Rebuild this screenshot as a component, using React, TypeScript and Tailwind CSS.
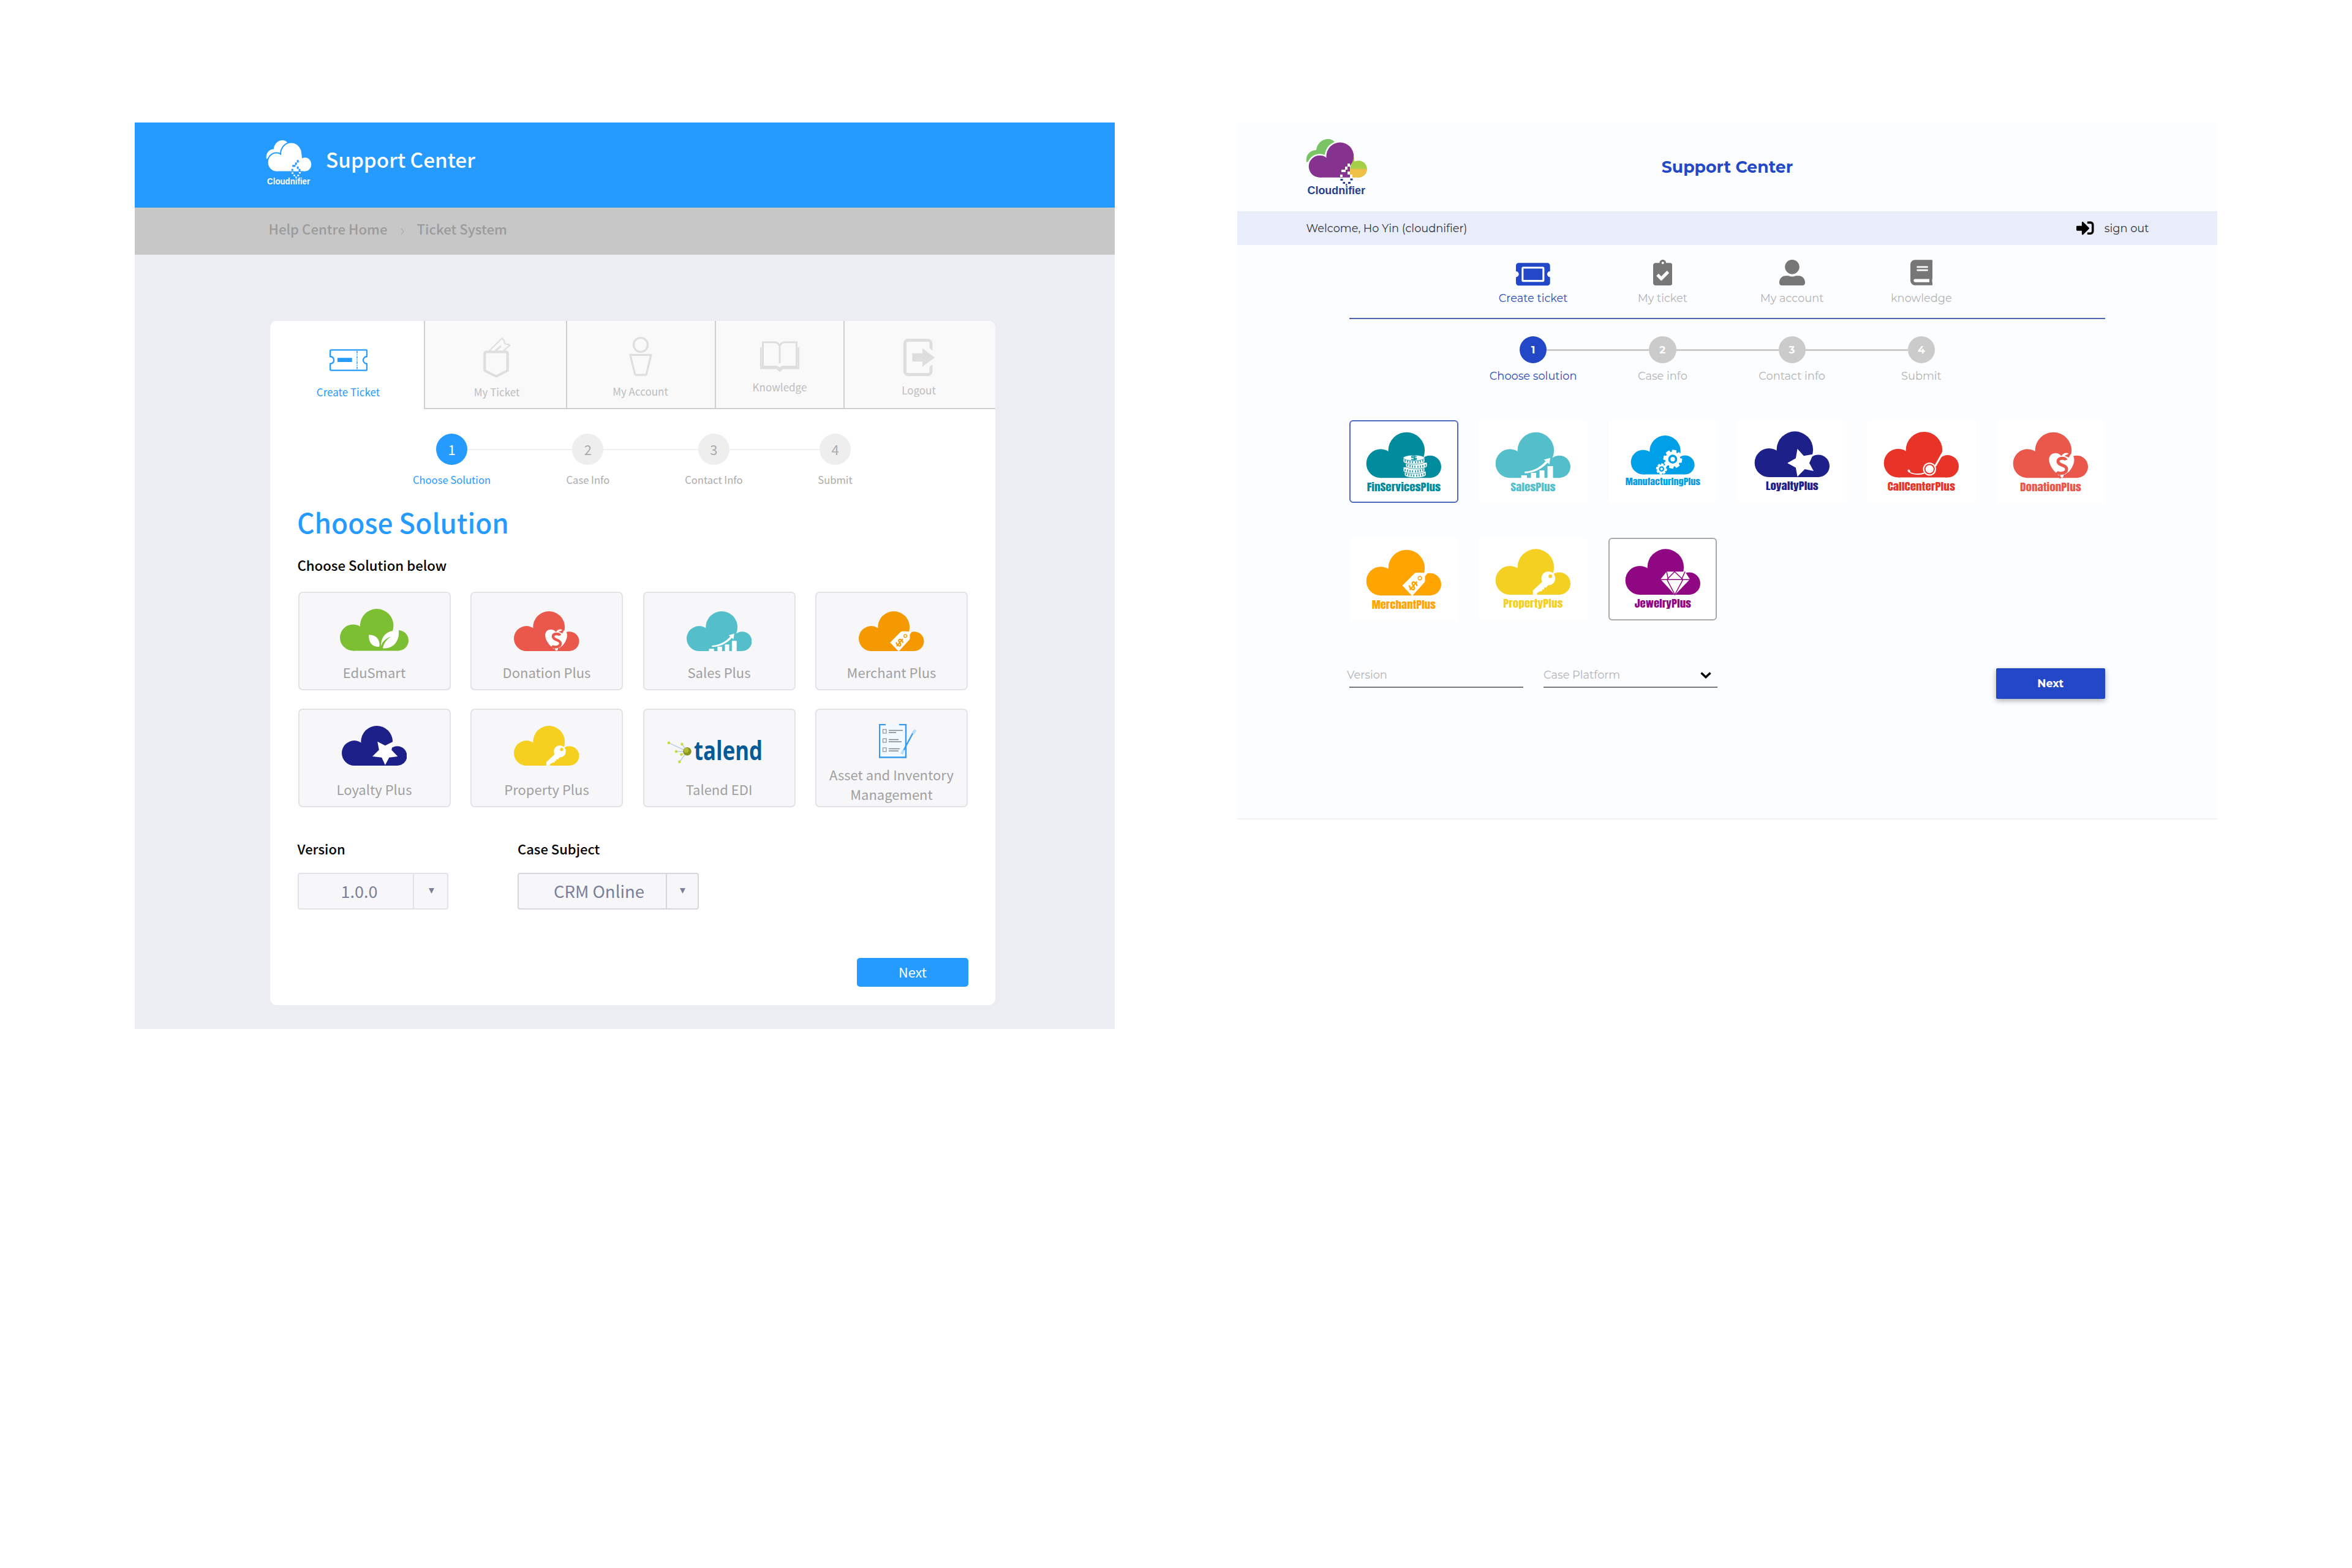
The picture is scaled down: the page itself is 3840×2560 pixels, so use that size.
import React from "react";
import {
  FaTicketAlt,
  FaClipboardCheck,
  FaUserAlt,
  FaBook,
  FaSignInAlt,
} from "react-icons/fa";

/* ---------- Product clouds ---------- */

type Product =
  | "edu"
  | "donation"
  | "sales"
  | "merchant"
  | "loyalty"
  | "loyaltyTilted"
  | "property"
  | "fin"
  | "manufacturing"
  | "callcenter"
  | "jewelry";

function Gear({ cx, cy, r, color }: { cx: number; cy: number; r: number; color: string }) {
  const teeth = [0, 45, 90, 135];
  return (
    <g>
      {teeth.map((a) => (
        <rect
          key={a}
          x={cx - r * 0.24}
          y={cy - r}
          width={r * 0.48}
          height={r * 2}
          rx={r * 0.08}
          fill="#fff"
          transform={`rotate(${a + 10} ${cx} ${cy})`}
        />
      ))}
      <circle cx={cx} cy={cy} r={r * 0.8} fill="#fff" />
      <circle cx={cx} cy={cy} r={r * 0.36} fill="none" stroke={color} strokeWidth={r * 0.24} />
    </g>
  );
}

function Coin({ x, y, color }: { x: number; y: number; color: string }) {
  return (
    <g>
      <path d={`M${x} ${y}v5.500c0 6.500 35 6.500 35 0v-5.500z`} fill="#fff" stroke={color} strokeWidth=".8" />
      <path
        d={`M${x + 3} ${y + 2.8}v3.600M${x + 7} ${y + 4}v3.600M${x + 11} ${y + 4.7}v3.600M${x + 15} ${y + 5.1}v3.600M${x + 20} ${y + 5.1}v3.600M${x + 24} ${y + 4.7}v3.600M${x + 28} ${y + 4}v3.600M${x + 32} ${y + 2.8}v3.600`}
        stroke={color}
        strokeWidth="1.5"
      />
    </g>
  );
}

function Emblem({ kind, color }: { kind: Product; color: string }) {
  switch (kind) {
    case "edu":
      return (
        <g fill="#fff">
          <path d="M51.500 46.500C62 46.500 72 52 70.500 67.500 57 68.500 51.500 60 51.500 46.500z" />
          <path d="M104.500 35C108 54 98 72 76.500 70.500 78 62 83 55 91 49.500 81 53 75 60 73.500 66.500 73 49 84 41 93 39.500 98 39 101 38 104.500 35z" />
        </g>
      );
    case "donation":
      return (
        <g>
          <path
            d="M80 74.500C70 68 58.800 56 58.800 45 58.800 33 73 31 79 39 82 33 89 33 91 35.500L84 38.500 91 41.500 94 36C98 37 100 41 100 45 100 56 90 68 80 74.500z"
            fill="#fff"
          />
          <path
            d="M86.500 45.500C85 41.500 73.500 41 73.500 47.500 73.500 55 87.500 52.500 87.500 60.500 87 68.500 74 68 71.500 65"
            fill="none"
            stroke={color}
            strokeWidth="5"
          />
          <path d="M65 68l6 3M76 69.500l1 6M84 69l-1 5M91 66l-7 5" stroke={color} strokeWidth="2" />
        </g>
      );
    case "sales":
      return (
        <g fill="#fff">
          <path d="M42 70.500h9.400v5H42zM58 66.500h8.500v9H58zM72 62.500h8v13h-8zM85 55.500h9v20h-9z" />
          <path d="M47.500 64.500C61 64 74 57 82 47.500l-3-2.500 10.500-3-1.500 10.500-3-2.500C76 60 62 67 47.500 67z" />
        </g>
      );
    case "merchant":
      return (
        <g>
          <path
            d="M75 75.500L59 58.500 79 38.500Q80.500 37.500 82 37.500H89Q90.500 37.500 91.500 38.500L95.500 43Q96 44 96 45V51Q96 52.500 95 53.500z"
            fill="#fff"
          />
          <path d="M90.500 37.500L100 38.500 95.500 44z" fill="#fff" />
          <circle cx="87.500" cy="46.300" r="2.800" fill="none" stroke={color} strokeWidth="1.500" />
          <g transform="rotate(40 76.700 58.700)">
            <path
              d="M81.500 55.500C80 52 72.500 52 72.500 55.500 72.500 60 81.500 57.500 81.500 62 81.500 65.500 73 65.500 72 62M77 49.500v18"
              fill="none"
              stroke={color}
              strokeWidth="2.400"
            />
          </g>
        </g>
      );
    case "loyalty":
      return (
        <path
          d="M67 29.500L81.500 37 96.500 29.500 93.500 45.500 105 57.500 89 59.500 81.500 73.500 75 59.500 57.500 57.500 70 45z"
          fill="#fff"
        />
      );
    case "loyaltyTilted":
      return (
        <path
          d="M70 28.300L80.400 40 96 37.300 89.400 51.700 96.500 64.700 82 61.700 70 74 67.300 59.300 53.500 51.700 67.300 44z"
          fill="#fff"
        />
      );
    case "property":
      return (
        <g>
          <path d="M78 52L86 59 83 63H79.500V66H76.500V69H73L68 72V75H61V68z" fill="#fff" />
          <circle cx="86.300" cy="48" r="11.300" fill="#fff" />
          <circle cx="89.700" cy="44.500" r="3" fill={color} />
        </g>
      );
    case "fin":
      return (
        <g>
          <Coin x={62.5} y={64} color={color} />
          <Coin x={60.5} y={57} color={color} />
          <Coin x={64.5} y={49.5} color={color} />
          <Coin x={60.5} y={42} color={color} />
          <ellipse cx="78" cy="42" rx="17.500" ry="4.600" fill="#fff" stroke={color} strokeWidth=".8" />
          <path
            d="M82 40.300C80 38.300 73.500 38.300 74 40.500 74.500 42.800 82 41.300 82 43.500 82 45.500 75 45.500 73.500 43.800M78.500 37.800v8.300"
            fill="none"
            stroke={color}
            strokeWidth="1.600"
          />
        </g>
      );
    case "manufacturing":
      return (
        <g>
          <Gear cx={80.5} cy={45.5} r={18} color={color} />
          <Gear cx={59} cy={64.3} r={10.5} color={color} />
        </g>
      );
    case "callcenter":
      return (
        <g>
          <path d="M96.500 34L84 56" stroke="#fff" strokeWidth="3" />
          <path d="M66 67.500C60 70 48 70.500 41.500 65.500" fill="none" stroke="#fff" strokeWidth="1.700" />
          <ellipse cx="41" cy="64" rx="2.600" ry="1.900" fill="#fff" transform="rotate(50 41 64)" />
          <circle cx="74.700" cy="61" r="10.700" fill="#fff" />
          <circle cx="74.700" cy="61" r="7.600" fill="none" stroke={color} strokeWidth="2" />
        </g>
      );
    case "jewelry":
      return (
        <g>
          <path d="M67.500 37H97.500L105.500 49.500 81 75 57.500 49.500z" fill="#fff" />
          <path
            d="M57 50H106M68 50L81 74.500 94 50M68.500 49.500L80.500 37 93.500 49.500M67.500 37L70 49.500M97.500 37L92 49.500"
            fill="none"
            stroke={color}
            strokeWidth="1.500"
          />
        </g>
      );
  }
}

function CloudBody({ kind, color }: { kind: Product; color: string }) {
  return (
    <>
      <g fill={color}>
        <circle cx="23.500" cy="51.200" r="23.500" />
        <circle cx="65.800" cy="29.800" r="29.800" />
        <circle cx="104.200" cy="56.400" r="18.300" />
        <path d="M23.500 74.700V45H90L104.200 60V74.700z" />
      </g>
      <Emblem kind={kind} color={color} />
    </>
  );
}

/* ---------- Company mark ---------- */

function CompanyMark({ mono }: { mono?: boolean }) {
  const main = mono ? "#fff" : "#85338f";
  const back = mono ? "#fff" : "#7ac465";
  const gap = mono ? "#259bff" : "#fcfdff";
  const ink = mono ? "#fff" : "#233f8f";
  return (
    <svg
      viewBox="0 0 98.5 92"
      preserveAspectRatio="none"
      overflow="visible"
      className={mono ? "h-[74px] w-[73px]" : "h-[92px] w-[98.5px]"}
    >
      <path fill={back} d="M0 38C-2 26 6 18 16 18 17 7 26 0 35 0 40 0 44 2 46 5L34 30 8 34z" />
      <g fill={gap}>
        <circle cx="21.700" cy="44.700" r="20.500" />
        <circle cx="54.800" cy="28" r="25" />
      </g>
      <circle cx="85" cy="49" r="13.800" fill={mono ? "#fff" : "#a5cf47"} />
      <path d="M72 44L77 27 79 40z" fill={mono ? "#fff" : "#a5cf47"} />
      {mono ? (
        <path d="M60 45H85V62.700H60z" fill="#fff" />
      ) : (
        <path d="M71 48.700H98.500A13.800 14 0 0 1 85 62.700H71z" fill="#eec046" />
      )}
      <g fill={main}>
        <circle cx="21.700" cy="44.700" r="18" />
        <ellipse cx="54.800" cy="28" rx="22.400" ry="22.500" />
        <path d="M21.700 62.700V38L40 30H76.500Q75 38 71 44V62.700z" />
      </g>
      <path d="M67 40h4v5h-4zM63 45h4v5h-4zM60 50h4v4h-4zM63 54h-6v-4h6zM55 58h4v4h-4zM67 53h4v5h-4zM71 58h4v5h-4z" fill={gap} />
      <path d="M55.500 65h4v3h-4zM59.500 70h3.500v3h-3.500zM64 73.500h2.500v2.500h-2.500zM68 70h4v3h-4zM71.500 64.500h4v3h-4z" fill={ink} />
      <text
        x="1.500"
        y="89.700"
        textLength="94.500"
        lengthAdjust="spacingAndGlyphs"
        fill={ink}
        className="font-['Liberation_Sans',Arial,sans-serif] text-[17.500px] font-bold"
      >
        Cloudnifier
      </text>
    </svg>
  );
}

/* ---------- Classic portal: tab icons ---------- */

function TicketOutline() {
  return (
    <svg viewBox="0 0 62 36" className="h-9 w-[62px]" fill="none" stroke="#259bff" strokeWidth="2.300">
      <path d="M2.500 1.300H59.500Q61 1.300 61 2.500V12C53 13 53 23 61 24V33.500Q61 34.700 59.500 34.700H2.500Q1.200 34.700 1.200 33.500V24C9 23 9 13 1.200 12V2.500Q1.200 1.300 2.500 1.300z" />
      <path d="M45 3V34" strokeWidth="1.500" strokeDasharray="4 1.500 1.500 1.500" />
      <path d="M13 14.300H36.700V21H13z" fill="#259bff" stroke="none" />
    </svg>
  );
}

function PocketOutline() {
  return (
    <svg viewBox="0 0 45 66" className="h-[66px] w-[45px]" fill="none" stroke="#dedede">
      <path d="M10 21.500L30.500 1.300 34 5C33.500 9 36 11.500 40.500 11L43.300 13 33 21.500" strokeWidth="2.200" />
      <path d="M20 21.500L29 14" strokeWidth="3" />
      <path d="M5 23.500H37Q39.700 23.500 39.700 26V54L21 63.500 2.300 54V26Q2.300 23.500 5 23.500z" strokeWidth="4.200" strokeLinejoin="round" />
    </svg>
  );
}

function PersonOutline() {
  return (
    <svg viewBox="0 0 38 64" className="h-16 w-[38px]" fill="none" stroke="#dedede" strokeWidth="3.200">
      <circle cx="19" cy="13" r="11.500" />
      <path d="M2 29.300H36L28.500 60Q28 62.200 26 62.200H12Q10 62.200 9.500 60z" strokeLinejoin="round" />
    </svg>
  );
}

function BookOutline() {
  return (
    <svg viewBox="0 0 64 50" className="h-[50px] w-16" fill="none" stroke="#dedede" strokeWidth="3">
      <path d="M32 36V8Q30 1.800 23 1.800H4.500V41.500H25Q30 41.500 32 46 34 41.500 39 41.500H59.500V1.800H41Q34 1.800 32 8" />
      <path d="M1.300 10V44.300H27L32 48.500 37 44.300H62.700V10" strokeWidth="2.600" />
    </svg>
  );
}

function ExitOutline() {
  return (
    <svg viewBox="0 0 51 61" className="h-[61px] w-[51px]">
      <rect x="2.500" y="2.500" width="42.500" height="56" rx="5" fill="none" stroke="#dedede" strokeWidth="5" />
      <path d="M38 12L54 25V37L38 49z" fill="#f9f9f9" />
      <path d="M16 23.700H31V15.500L51 30.700 31 45.700V37.300H16Q14.500 37.300 14.500 36V25Q14.500 23.700 16 23.700z" fill="#dedede" />
    </svg>
  );
}

const tabs = [
  { label: "Create Ticket", icon: <TicketOutline />, box: "bg-white pt-[45.5px] pl-1", text: "mt-[24.6px] text-[#259bff]" },
  { label: "My Ticket", icon: <PocketOutline />, box: "border-b-2 border-l-2 border-[#cfcfcf] bg-[#f9f9f9] pt-[26.5px] pl-1", text: "mt-[13.6px] text-[#bdbdbd]" },
  { label: "My Account", icon: <PersonOutline />, box: "border-b-2 border-l-2 border-[#cfcfcf] bg-[#f9f9f9] pt-[25.5px] pr-[2px]", text: "mt-[15.6px] text-[#bdbdbd]" },
  { label: "Knowledge", icon: <BookOutline />, box: "border-b-2 border-l-2 border-[#cfcfcf] bg-[#f9f9f9] pt-[32.5px]", text: "mt-[15.5px] text-[#bdbdbd]" },
  { label: "Logout", icon: <ExitOutline />, box: "border-b-2 border-l-2 border-[#cfcfcf] bg-[#f9f9f9] pt-[29px] pr-1 rounded-tr-[11px]", text: "mt-[13px] text-[#bdbdbd]" },
];

const classicSteps = [
  { label: "Choose Solution", line: "" },
  { label: "Case Info", line: "w-[171.4px]" },
  { label: "Contact Info", line: "w-[154.5px]" },
  { label: "Submit", line: "w-[147.1px]" },
];

function ClassicCloud({ kind, color, size }: { kind: Product; color: string; size: string }) {
  return (
    <svg viewBox="0 0 122.5 74.7" className={size}>
      <CloudBody kind={kind} color={color} />
    </svg>
  );
}

function TalendLogo() {
  const dots: [number, number][] = [[2, 9.9], [23.5, 12], [14, 24], [22.5, 28.8], [19.4, 40.8]];
  return (
    <svg viewBox="0 0 155 46" overflow="visible" className="mb-[5px] h-[46px] w-[155px] -translate-x-[7px]">
      {dots.map(([x, y]) => (
        <path key={x} d={`M${x} ${y}L32 23.700`} stroke="#b9cfe6" strokeWidth="1.500" />
      ))}
      {dots.map(([x, y]) => (
        <circle key={y} cx={x} cy={y} r="2.300" fill="#c9da3f" />
      ))}
      <circle cx="32" cy="23.700" r="6.800" fill="#8b951f" />
      <circle cx="30.500" cy="22" r="4" fill="#aebb33" />
      <text
        x="43"
        y="37.500"
        textLength="112"
        lengthAdjust="spacingAndGlyphs"
        fill="#065a96"
        className="font-['Open_Sans',sans-serif] text-[43px] font-bold"
      >
        talend
      </text>
    </svg>
  );
}

function ChecklistIcon() {
  return (
    <svg viewBox="0 0 61 56" className="h-14 w-[61px] translate-x-2.5" fill="none">
      <path d="M1 1H44V54.500H1z" fill="#f2faff" stroke="#359bf2" strokeWidth="2.400" />
      <path d="M11 0H33V3.500H11z" fill="#f0f9ff" />
      {[12, 27, 42].map((y) => (
        <g key={y}>
          <rect x="6.500" y={y - 3} width="5.500" height="6" stroke="#8a8f98" strokeWidth="1.200" />
          <path
            d={`M16 ${y - 1.5}h${y === 12 ? 23 : y === 27 ? 16 : 18}M16 ${y + 2}h${y === 12 ? 12 : y === 27 ? 21 : 16}`}
            stroke="#7d838c"
            strokeWidth="1.500"
          />
        </g>
      ))}
      <path d="M57.500 11L40 43.500" stroke="#359bf2" strokeWidth="2.400" />
      <path d="M59.500 9.500L56 16M40.500 42.500L37 49" stroke="#b5defa" strokeWidth="4" />
    </svg>
  );
}

const classicCards = [
  { label: "EduSmart", art: <ClassicCloud kind="edu" color="#7dbf32" size="h-[68.500px] w-[112px]" /> },
  { label: "Donation Plus", art: <ClassicCloud kind="donation" color="#ea574b" size="h-[65px] w-[106.500px]" /> },
  { label: "Sales Plus", art: <ClassicCloud kind="sales" color="#54bfcb" size="h-[65px] w-[106.500px]" /> },
  { label: "Merchant Plus", art: <ClassicCloud kind="merchant" color="#f49a00" size="h-[65px] w-[106.500px]" /> },
  { label: "Loyalty Plus", art: <ClassicCloud kind="loyalty" color="#1d2088" size="h-[65px] w-[106.500px] mb-1" /> },
  { label: "Property Plus", art: <ClassicCloud kind="property" color="#f5d020" size="h-[65px] w-[106.500px] mb-1" /> },
  { label: "Talend EDI", art: <TalendLogo /> },
  { label: "Asset and Inventory Management", art: <ChecklistIcon />, wide: true },
];

function ClassicPortal() {
  return (
    <section className="flex h-[1480px] w-[1600px] flex-col bg-[#ecedf3] font-['Noto_Sans_CJK_SC',sans-serif]">
      <header className="flex h-[139px] items-start gap-[24px] bg-[#259bff] pl-[215px] text-white">
        <div className="mt-[29px]">
          <CompanyMark mono />
        </div>
        <h1 className="mt-10 text-[33.300px] leading-10 font-medium">Support Center</h1>
      </header>
      <nav className="flex h-[77px] items-start border-t border-b border-[#cfcfcf] bg-[#c7c7c7] pt-[13px] pl-[218.500px] text-[22.200px] leading-10 font-medium text-[#9b9b9b]">
        <span>Help Centre Home</span>
        <svg viewBox="0 0 6 12" className="mr-[21px] ml-[21px] mt-[19px] h-3 w-1.5" fill="none" stroke="#b0b0b0" strokeWidth="1.500">
          <path d="M1 1L5 6 1 11" />
        </svg>
        <span>Ticket System</span>
      </nav>

      <div className="mt-[108px] ml-[221px] flex h-[1117px] w-[1184px] flex-col rounded-[11px] bg-white">
        <div className="grid h-36 grid-cols-[251px_232px_243px_210px_248px] overflow-hidden rounded-t-[11px]">
          {tabs.map((t) => (
            <div key={t.label} className={`flex flex-col items-center text-[17px] leading-5 ${t.box}`}>
              {t.icon}
              <span className={t.text}>{t.label}</span>
            </div>
          ))}
        </div>

        <ol className="mt-[39.500px] flex h-[86px] pl-[271px]">
          {classicSteps.map((s, i) => (
            <li key={s.label} className="flex">
              {i > 0 && <div className={`mt-[25px] h-[2.500px] bg-[#f0f0f0] ${s.line}`} />}
              <div className="flex w-[51px] flex-col items-center">
                <div
                  className={`flex size-[51px] items-center justify-center rounded-full text-[22px] ${
                    i === 0 ? "bg-[#259bff] text-white" : "bg-[#eeeeee] text-[#ababab]"
                  }`}
                >
                  {i + 1}
                </div>
                <span
                  className={`mt-[14.500px] text-[16.600px] leading-5 whitespace-nowrap ${
                    i === 0 ? "text-[#259bff]" : "text-[#ababab]"
                  }`}
                >
                  {s.label}
                </span>
              </div>
            </li>
          ))}
        </ol>

        <h2 className="mt-[33.500px] ml-[44px] text-[44.200px] leading-[50px] font-medium text-[#259bff]">Choose Solution</h2>
        <p className="mt-[29.500px] ml-[44.500px] text-[22.200px] leading-[30px] font-medium text-black">Choose Solution below</p>

        <div className="mt-[29.500px] ml-[45.500px] grid w-[1093.500px] grid-cols-4 grid-rows-[160.500px_160.500px] gap-x-[32.500px] gap-y-[30.500px]">
          {classicCards.map((c) => (
            <div
              key={c.label}
              className="flex flex-col items-center rounded-[7px] border-2 border-[#e2e3e7] bg-[#f7f7fa] text-center text-[22px] leading-8 text-[#a0a0a0]"
            >
              <div className={c.wide ? "flex h-[79px] items-end" : "flex h-[94.500px] items-end"}>{c.art}</div>
              <span className={c.wide ? "mt-[10px] w-[215px]" : "mt-[18.500px]"}>{c.label}</span>
            </div>
          ))}
        </div>

        <div className="mt-[52px] ml-[44.500px] flex gap-[113.500px]">
          <div>
            <p className="text-[22px] leading-[30px] font-medium text-black">Version</p>
            <div className="mt-[25px] flex h-[60.500px] w-[246px] rounded-[4px] border-2 border-[#e2e3e8] bg-[#f7f7fa] text-[#7a8099]">
              <div className="flex flex-1 items-center justify-center pl-[12px] text-[27px]">1.0.0</div>
              <div className="flex w-[56px] items-center justify-center border-l-2 border-[#e2e3e8] pl-1">
                <svg viewBox="0 0 9 9" className="size-[9px]" fill="#7a8099">
                  <path d="M0 0H9L4.500 9z" />
                </svg>
              </div>
            </div>
          </div>
          <div>
            <p className="text-[22px] leading-[30px] font-medium text-black">Case Subject</p>
            <div className="mt-[25px] flex h-[60.500px] w-[296px] rounded-[4px] border-2 border-[#d6d8de] bg-[#f7f7fa] text-[#7a8099]">
              <div className="flex flex-1 items-center justify-center pl-[22px] text-[27.500px]">CRM Online</div>
              <div className="flex w-[52px] items-center justify-center border-l-2 border-[#d6d8de] pl-px">
                <svg viewBox="0 0 9 9" className="size-[9px]" fill="#7a8099">
                  <path d="M0 0H9L4.500 9z" />
                </svg>
              </div>
            </div>
          </div>
        </div>

        <button className="mt-[79px] ml-[958px] flex h-[47px] w-[182px] items-center justify-center rounded-[5px] bg-[#259bff] text-[21.700px] text-white">
          Next
        </button>
      </div>
    </section>
  );
}

/* ---------- Redesigned portal ---------- */

const menu = [
  { label: "Create ticket", icon: <FaTicketAlt className="-mb-[6px] h-[49.500px] w-[55.700px]" />, active: true },
  { label: "My ticket", icon: <FaClipboardCheck className="h-[42px] w-[31.500px]" /> },
  { label: "My account", icon: <FaUserAlt className="size-[42px]" /> },
  { label: "knowledge", icon: <FaBook className="h-[42px] w-[36.500px]" /> },
];

const modernSteps = ["Choose solution", "Case info", "Contact info", "Submit"];

type Tile = { name: string; kind: Product; color: string; width: number; frame: string; dy?: number; small?: boolean };

const tiles: Tile[] = [
  { name: "FinServicesPlus", kind: "fin", color: "#008c9c", width: 120.5, frame: "border-[#4f68bf]" },
  { name: "SalesPlus", kind: "sales", color: "#54bfcb", width: 73.5, frame: "border-transparent" },
  { name: "ManufacturingPlus", kind: "manufacturing", color: "#00a0e9", width: 122.5, frame: "border-transparent", small: true },
  { name: "LoyaltyPlus", kind: "loyaltyTilted", color: "#1d2088", width: 86, frame: "border-transparent", dy: -1.3 },
  { name: "CallCenterPlus", kind: "callcenter", color: "#e83428", width: 110.5, frame: "border-transparent", dy: -0.7 },
  { name: "DonationPlus", kind: "donation", color: "#ea574b", width: 100, frame: "border-transparent" },
  { name: "MerchantPlus", kind: "merchant", color: "#ffa400", width: 104.5, frame: "border-transparent" },
  { name: "PropertyPlus", kind: "property", color: "#f3d022", width: 97.5, frame: "border-transparent", dy: -1.3 },
  { name: "JewelryPlus", kind: "jewelry", color: "#8f0783", width: 92.5, frame: "border-[#a8a8a8]", dy: -1.3 },
];

function ProductTile({ name, kind, color, width, frame, dy = 0, small }: Tile) {
  return (
    <div className={`overflow-hidden rounded-[6px] border-2 bg-white ${frame}`}>
      <svg viewBox="2 2 174 131" className="size-full">
        <g transform={small ? "translate(36.700 25) scale(.85)" : `translate(27.700 ${19.6 + dy})`}>
          <CloudBody kind={kind} color={color} />
        </g>
        <text
          x={89 - width / 2}
          y={small ? 106.2 : 115.8 + dy}
          textLength={width}
          lengthAdjust="spacingAndGlyphs"
          fill={color}
          className={
            small
              ? "font-['Anton','Liberation_Sans',sans-serif] text-[13px]"
              : "font-['Anton','Liberation_Sans',sans-serif] text-[15.500px]"
          }
        >
          {name}
        </text>
      </svg>
    </div>
  );
}

function ModernPortal() {
  return (
    <section className="flex h-[1138px] w-[1600px] flex-col border-b-2 border-[#f1f2f4] bg-[#fcfdff] font-['Montserrat','Inter',sans-serif] text-[17.800px] leading-6">
      <header className="grid h-[145px] grid-cols-3 items-center px-[112.500px]">
        <CompanyMark />
        <h1 className="text-center text-[26.700px] leading-8 font-bold text-[#2248c8]">Support Center</h1>
      </header>
      <div className="flex h-[55px] items-center justify-between bg-[#e9edf9] pr-[111.500px] pl-[112.500px] text-[#33343c]">
        <span>Welcome, Ho Yin (cloudnifier)</span>
        <span className="flex items-center gap-[17px]">
          <FaSignInAlt className="size-[28.500px] text-black" />
          sign out
        </span>
      </div>

      <div className="mx-auto w-[1234px]">
        <nav className="mx-auto grid w-[845px] grid-cols-4">
          {menu.map((m) => (
            <div key={m.label} className={`flex flex-col items-center ${m.active ? "text-[#2248c8]" : "text-[#777777]"}`}>
              <div className="flex h-[66px] items-end">{m.icon}</div>
              <span className={`mt-[9px] ${m.active ? "text-[#2b4bb5]" : "text-[#b2b3b6]"}`}>{m.label}</span>
            </div>
          ))}
        </nav>
        <div className="mt-5 h-[2px] bg-[#4a63b4]" />

        <ol className="mx-auto mt-[28px] flex h-[77px] w-[678px] justify-between">
          {modernSteps.map((s, i) => (
            <li key={s} className="flex">
              {i > 0 && <div className="mt-[21px] h-[3px] w-[167px] bg-[#cbcbcb]" />}
              <div className="flex w-[44.250px] flex-col items-center">
                <div
                  className={`flex size-[44.250px] items-center justify-center rounded-full text-[17px] font-bold text-white ${
                    i === 0 ? "bg-[#2248c8]" : "bg-[#cbcbcb]"
                  }`}
                >
                  {i + 1}
                </div>
                <span className={`mt-[9px] whitespace-nowrap ${i === 0 ? "text-[#2b4bb5]" : "text-[#b2b3b6]"}`}>{s}</span>
              </div>
            </li>
          ))}
        </ol>

        <div className="mt-[60px] grid grid-cols-6 grid-rows-[135px_135px] gap-x-[33.500px] gap-y-[56.500px]">
          {tiles.map((t) => (
            <ProductTile key={t.name} {...t} />
          ))}
        </div>

        <div className="mt-[77px] flex items-start text-[#b2b3b6]">
          <div className="h-[33px] w-[284px] border-b-2 border-[#77777c]">
            <span className="-ml-1">Version</span>
          </div>
          <div className="ml-[33px] flex h-[33px] w-[283.500px] items-start justify-between border-b-2 border-[#77777c] pr-[10px]">
            <span>Case Platform</span>
            <svg viewBox="0 0 18 11" className="mt-[7px] h-[11px] w-[18px]" fill="none" stroke="#000" strokeWidth="3.500">
              <path d="M1.500 1.500L9 8.500 16.500 1.500" />
            </svg>
          </div>
          <button className="mt-px ml-auto h-[50px] w-[178.500px] rounded-[2px] bg-[#2248c8] text-[17.500px] font-bold text-white shadow-[0_3px_9px_rgba(0,0,0,0.32)]">
            Next
          </button>
        </div>
      </div>
    </section>
  );
}

export default function App() {
  return (
    <main className="flex h-[2560px] w-[3840px] items-start gap-[200px] bg-white pt-[200px] pl-[220px]">
      <ClassicPortal />
      <ModernPortal />
    </main>
  );
}
